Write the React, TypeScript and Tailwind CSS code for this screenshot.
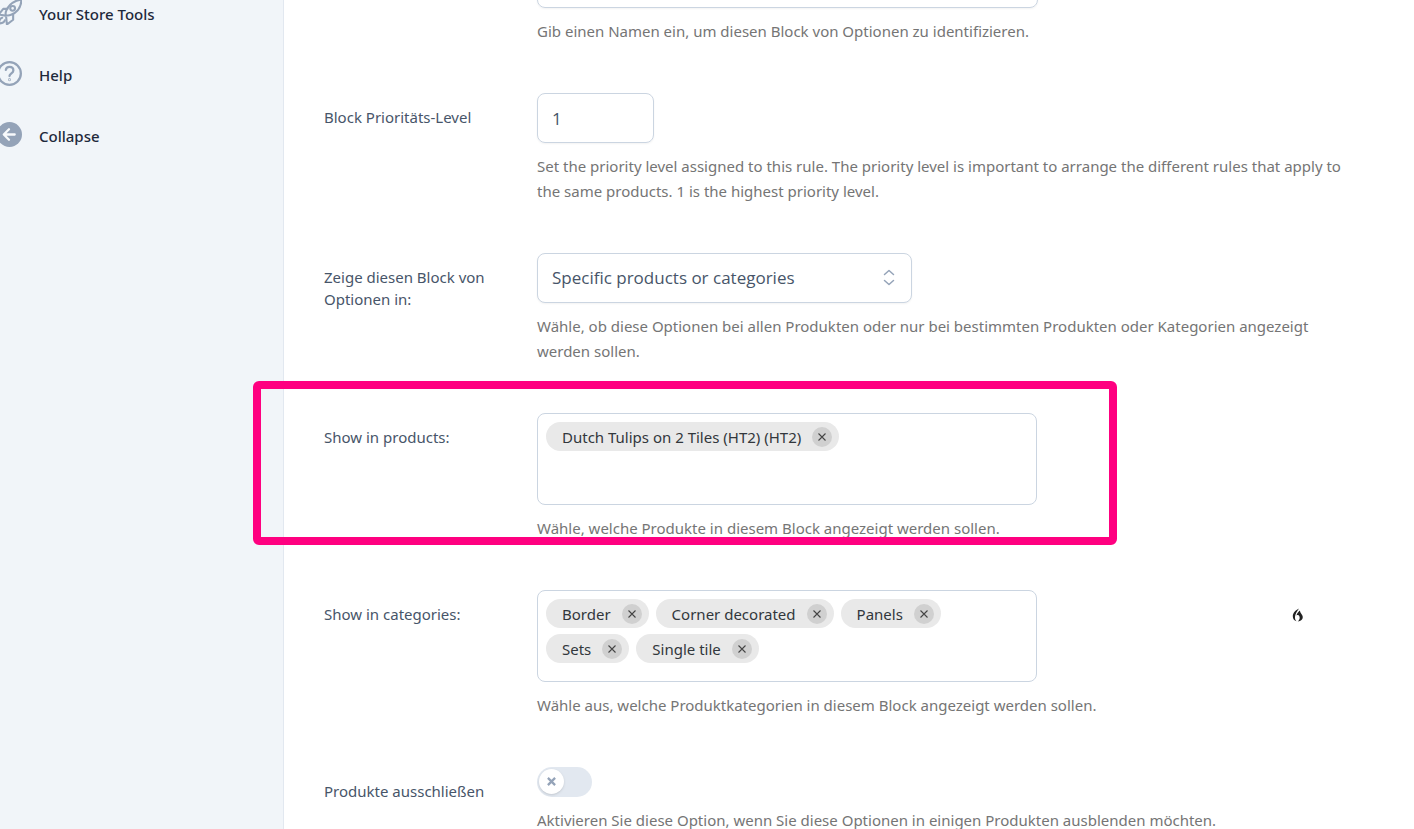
import React, { useState } from 'react';

type FieldProps = {
  label?: string;
  htmlFor: string;
  help: string;
  highlight?: boolean;
  children: React.ReactNode;
};

const Field: React.FC<FieldProps> = ({ label, htmlFor, help, highlight, children }) => (
  <div className="relative flex">
    <div className="w-[213px] shrink-0 pt-[13px] pr-10 text-[15px] leading-[22px] text-[#475569]">
      {label && <label htmlFor={htmlFor}>{label}</label>}
    </div>
    <div className="min-w-0 flex-1">
      {children}
      <p className="mt-[11px] text-[15px] leading-[25px] text-[#757575]">{help}</p>
    </div>
    {highlight && (
      <div className="pointer-events-none absolute -top-8 -bottom-1 -left-[71px] w-[864px] rounded-md border-8 border-[#ff0080]" />
    )}
  </div>
);

type TagBoxProps = {
  id: string;
  tags: string[];
  onRemove: (tag: string) => void;
};

const TagBox: React.FC<TagBoxProps> = ({ id, tags, onRemove }) => (
  <div
    id={id}
    className="flex min-h-[92px] w-[500px] flex-wrap content-start gap-x-[7px] gap-y-1.5 rounded-lg border border-[#cbd5e1] p-2"
  >
    {tags.map((tag) => (
      <span key={tag} className="flex h-[29px] items-center gap-[11px] rounded-full bg-[#e9e9e9] pr-[7px] pl-4 text-[15px] text-[#32373c]">
        <span className="pt-0.5">{tag}</span>
        <button
          type="button"
          aria-label={`${tag} entfernen`}
          className="flex size-5 items-center justify-center rounded-full bg-[#d0d0d0]"
          onClick={() => onRemove(tag)}
        >
          <svg viewBox="0 0 8 8" className="size-2" fill="none" stroke="#444" strokeWidth="1.1">
            <path d="M0.5 0.5l7 7M7.5 0.5l-7 7" />
          </svg>
        </button>
      </span>
    ))}
  </div>
);

const RocketIcon = () => (
  <svg viewBox="0 0 24 24" className="size-[25px] shrink-0" fill="none" stroke="#94a3b8" strokeWidth="2" strokeLinecap="round" strokeLinejoin="round">
    <path d="M8.500 14.500c-.5-1.500-.3-2.800.5-4.500C11.500 4.500 16.500.5 23.500-.5c-.3 7.500-4.500 12.500-10 14.700-1.800.7-3.500 1-5 .3z" />
    <circle cx="15" cy="8" r="2.300" />
    <path d="M10 8.500H6L1.500 14l6.500 1" />
    <path d="M15.500 13.700v5.300L9.500 23.500l-.7-7" />
    <path d="M5 17c-2 .5-3 3-3 5.500 2.500 0 5-.8 5.500-3" />
  </svg>
);

const HelpIcon = () => (
  <svg viewBox="0 0 24 24" className="size-[25px] shrink-0" fill="none" stroke="#94a3b8" strokeWidth="2.200" strokeLinecap="round">
    <circle cx="12" cy="12" r="10.900" />
    <path d="M8.500 8.500C8.800 6.500 10.200 5.700 12 5.700c2.200 0 3.700 1.300 3.700 3.300 0 2.800-3.700 2.800-3.700 5.500" />
    <circle cx="12" cy="18" r="0.300" />
  </svg>
);

const CollapseIcon = () => (
  <svg viewBox="0 0 24 24" className="size-[25px] shrink-0" fill="none">
    <circle cx="12" cy="12" r="12" fill="#94a3b8" />
    <path d="M17 12H7M11.500 7L6.500 12l5 5" stroke="#f8fafc" strokeWidth="2.200" strokeLinecap="round" strokeLinejoin="round" />
  </svg>
);

const menu = [
  { title: 'Your Store Tools', icon: <RocketIcon /> },
  { title: 'Help', icon: <HelpIcon /> },
  { title: 'Collapse', icon: <CollapseIcon /> },
];

const App: React.FC = () => {
  const [products, setProducts] = useState(['Dutch Tulips on 2 Tiles (HT2) (HT2)']);
  const [categories, setCategories] = useState(['Border', 'Corner decorated', 'Panels', 'Sets', 'Single tile']);
  const [exclude, setExclude] = useState(false);

  return (
    <div className="flex h-screen w-full overflow-hidden bg-white font-['Noto_Sans',sans-serif]">
      {/* Sidebar */}
      <nav className="w-[284px] shrink-0 border-r border-[#e2e8f0] bg-[#f1f5f9]">
        <ul className="-ml-[3px] flex flex-col gap-9">
          {menu.map((item) => (
            <li key={item.title}>
              <a href="#" className="flex h-[25px] items-center gap-[17px] text-[15px] leading-6 font-medium text-[#1e293b]">
                {item.icon}
                <span className="pt-0.5">{item.title}</span>
              </a>
            </li>
          ))}
        </ul>
      </nav>

      {/* Options form */}
      <form className="-mt-[42px] flex min-w-0 flex-1 flex-col gap-[49px] pr-[52px] pl-10">
        <Field htmlFor="name" help="Gib einen Namen ein, um diesen Block von Optionen zu identifizieren.">
          <input
            id="name"
            type="text"
            aria-label="Name"
            className="block h-[50px] w-[501px] rounded-lg border border-[#cbd5e1] px-3.5 shadow-xs"
          />
        </Field>

        <Field
          label="Block Prioritäts-Level"
          htmlFor="priority"
          help="Set the priority level assigned to this rule. The priority level is important to arrange the different rules that apply to the same products. 1 is the highest priority level."
        >
          <input
            id="priority"
            type="text"
            defaultValue="1"
            className="block h-[50px] w-[117px] rounded-lg border border-[#cbd5e1] px-3.5 font-['Open_Sans',sans-serif] text-[17px] text-[#475569] shadow-xs"
          />
        </Field>

        <Field
          label="Zeige diesen Block von Optionen in:"
          htmlFor="show"
          help="Wähle, ob diese Optionen bei allen Produkten oder nur bei bestimmten Produkten oder Kategorien angezeigt werden sollen."
        >
          <div className="relative w-[375px]">
            <select
              id="show"
              className="block h-[50px] w-full appearance-none rounded-lg border border-[#cbd5e1] bg-white px-3.5 font-['Open_Sans',sans-serif] text-[17px] text-[#475569] shadow-xs"
            >
              <option>Specific products or categories</option>
            </select>
            <svg
              viewBox="0 0 12 18"
              className="pointer-events-none absolute top-4 right-[17px] h-[18px] w-3"
              fill="none"
              stroke="#94a3b8"
              strokeWidth="1.500"
              strokeLinecap="round"
              strokeLinejoin="round"
            >
              <path d="M1.500 5.500L6 1.500l4.500 4M1.500 11.500l4.500 4 4.500-4" />
            </svg>
          </div>
        </Field>

        <Field label="Show in products:" htmlFor="products" help="Wähle, welche Produkte in diesem Block angezeigt werden sollen." highlight>
          <TagBox id="products" tags={products} onRemove={(tag) => setProducts(products.filter((t) => t !== tag))} />
        </Field>

        <Field label="Show in categories:" htmlFor="categories" help="Wähle aus, welche Produktkategorien in diesem Block angezeigt werden sollen.">
          <div className="flex justify-between">
            <TagBox id="categories" tags={categories} onRemove={(tag) => setCategories(categories.filter((t) => t !== tag))} />
            <svg viewBox="0 0 12 14" className="mt-[18px] mr-[58px] h-3.5 w-3" fill="#222">
              <path d="M7 .5C3.500 2 .8 5 .8 8.300c0 2.500 1.300 4.300 3.700 5C3.300 12 2.800 10.500 3 8.800 3.200 6 5.200 3.200 7 .5z" />
              <path d="M7.800 2.500C6 4.300 4.700 5.700 4.500 7.500c1.300-.6 2-.6 2.600.2 1 1.500.9 3.800-1.300 5.700 3.200-.2 5-2.100 5-4.400C10.800 6.600 8.300 5.500 7.800 2.500z" />
            </svg>
          </div>
        </Field>

        <Field label="Produkte ausschließen" htmlFor="exclude" help="Aktivieren Sie diese Option, wenn Sie diese Optionen in einigen Produkten ausblenden möchten.">
          <div className="relative h-[30px] w-[55px]">
            <input
              id="exclude"
              type="checkbox"
              checked={exclude}
              onChange={(e) => setExclude(e.target.checked)}
              className="peer block h-full w-full appearance-none rounded-full bg-[#e2e8f0] checked:bg-[#94a3b8]"
            />
            <span className="pointer-events-none absolute top-0.5 left-0.5 flex size-[25px] items-center justify-center rounded-full bg-white shadow-sm peer-checked:left-[28px]">
              <svg viewBox="0 0 10 10" className="size-[9px]" fill="none" stroke="#94a3b8" strokeWidth="2.500">
                <path d="M1 1l8 8M9 1l-8 8" />
              </svg>
            </span>
          </div>
        </Field>
      </form>
    </div>
  );
};

export default App;
